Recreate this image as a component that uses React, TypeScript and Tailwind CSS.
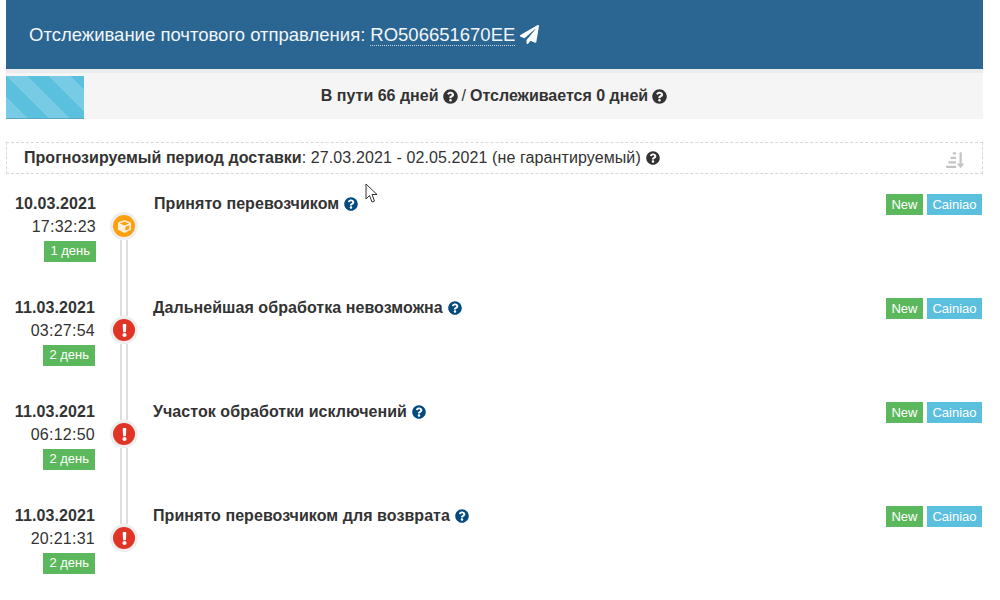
import React from "react";
import { FaQuestionCircle, FaPaperPlane, FaExclamation, FaCube, FaSortAmountDownAlt } from "react-icons/fa";

const rows = [
  { date: "10.03.2021", time: "17:32:23", days: "1 день", title: "Принято перевозчиком", kind: "box", first: true },
  { date: "11.03.2021", time: "03:27:54", days: "2 день", title: "Дальнейшая обработка невозможна", kind: "err" },
  { date: "11.03.2021", time: "06:12:50", days: "2 день", title: "Участок обработки исключений", kind: "err" },
  { date: "11.03.2021", time: "20:21:31", days: "2 день", title: "Принято перевозчиком для возврата", kind: "err" },
];

function Line({ className }: { className: string }) {
  return <div className={"w-2 border-x-2 border-[#dedede] bg-white " + className} />;
}

export default function App() {
  return (
    <div className="relative w-[1000px] h-[600px] overflow-hidden bg-white pl-[6px] pr-[17px] font-['Liberation_Sans',Arial,sans-serif] text-[#333]">
      <div className="h-[69px] bg-[#2b6592] flex items-center pl-[23px] text-[18.5px] text-[#f2f6f9]">
        <span>Отслеживание почтового отправления:</span>
        <span className="ml-[5px] border-b border-dotted border-[#c5d6e3] leading-[21px]">RO506651670EE</span>
        <FaPaperPlane className="ml-[5px] text-[19px] text-white" />
      </div>
      <div className="h-[4px] bg-[#ebebeb]" />
      <div className="h-[46px] bg-[#f5f5f5] relative flex items-center justify-center pr-[1px] text-[16px] font-bold text-[#333]">
        <div className="absolute left-0 top-[3px] w-[78px] h-[43px] bg-[repeating-linear-gradient(45deg,#77cbe4_0px,#77cbe4_15px,#5bc0de_15px,#5bc0de_30px)] border-b border-[#5aa7bf]" />
        В пути 66 дней
        <FaQuestionCircle className="mx-[4px] text-[15px] text-[#333]" />
        <span className="font-normal">/</span>
        <span className="ml-[4px]">Отслеживается 0 дней</span>
        <FaQuestionCircle className="ml-[4px] text-[15px] text-[#333]" />
      </div>
      <div className="mt-[23px] h-[32px] border border-dashed border-[#d8d8d8] flex items-center pl-[17px] pr-[18px] text-[16px]">
        <b className="tracking-[0.03px]">Прогнозируемый период доставки</b>
        <span className="tracking-[0.1px]">: 27.03.2021 - 02.05.2021 (не гарантируемый)</span>
        <FaQuestionCircle className="ml-[5px] text-[14px] text-[#333]" />
        <FaSortAmountDownAlt className="ml-auto text-[18px] text-[#c4c4c4] mt-[4px] -scale-x-100" />
      </div>
      <div className="mt-[18px]">
        {rows.map((r, i) => (
          <div key={i} className="flex h-[104px]">
            <div className={(r.first ? "w-[90px]" : "w-[89px]") + " flex flex-col items-end text-[16px] leading-[20px] pt-[2px] shrink-0"}>
              <b className="tracking-[0.1px]">{r.date}</b>
              <span className="mt-[3px] tracking-[0.25px]">{r.time}</span>
              <span className="mt-[4px] h-[21px] px-[6px] bg-[#5cb85c] text-white text-[13px] leading-[20px]">{r.days}</span>
            </div>
            <div className={(r.first ? "ml-[14px]" : "ml-[15px]") + " w-[28px] shrink-0 flex flex-col items-center"}>
              <Line className={r.first ? "h-[20px] invisible" : "h-[20px]"} />
              <div className="w-[28px] h-[28px] shrink-0 rounded-full bg-[#eeeeee] flex items-center justify-center">
                {r.kind === "box" ? (
                  <div className="w-[22px] h-[22px] rounded-full bg-[#ff9f12] flex items-center justify-center">
                    <FaCube className="text-[13px] text-[#fdf0da]" />
                  </div>
                ) : (
                  <div className="w-[22px] h-[22px] rounded-full bg-[#e03427] flex items-center justify-center">
                    <FaExclamation className="text-[13px] text-white" />
                  </div>
                )}
              </div>
              {i < rows.length - 1 ? <Line className="flex-1" /> : null}
            </div>
            <div className={(r.first ? "ml-[16px]" : "ml-[15px]") + " flex items-start pt-[2px] pr-[1px] text-[16px] font-bold flex-1"}>
              <span className="leading-[20px] tracking-[0.06px]">{r.title}</span>
              <FaQuestionCircle className="ml-[5px] mt-[3px] text-[14px] text-[#024a7f]" />
              <div className="ml-auto flex gap-[4px] text-[13px] font-normal text-white">
                <span className="h-[21px] w-[37px] flex items-center justify-center bg-[#5cb85c]">New</span>
                <span className="h-[21px] w-[55px] flex items-center justify-center bg-[#5bc0de]">Cainiao</span>
              </div>
            </div>
          </div>
        ))}
      </div>
      <svg className="absolute left-[365px] top-[183px]" width="13" height="21" viewBox="0 0 13 21">
        <path d="M1 1 L1 16 L4.5 12.5 L7 19 L9.5 18 L7 11.5 L12 11.5 Z" fill="white" stroke="#333" strokeWidth="1" />
      </svg>
    </div>
  );
}
